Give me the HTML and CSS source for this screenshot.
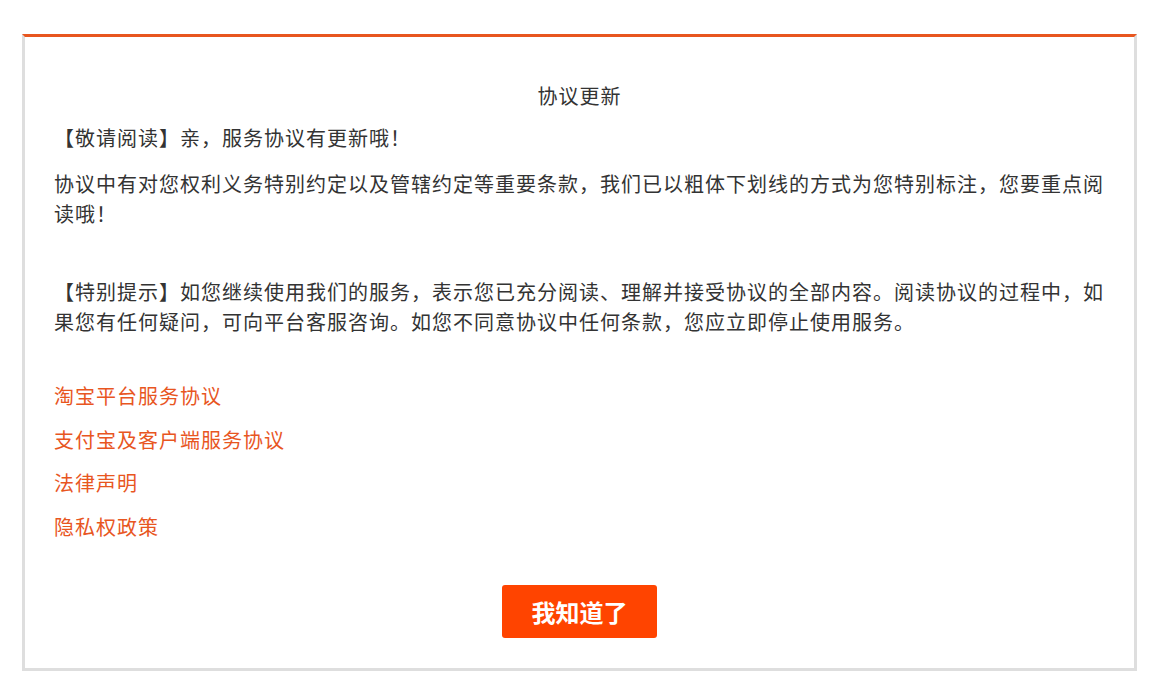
FILE: index.html
```html
<!DOCTYPE html>
<html lang="zh-CN">
<head>
  <meta charset="UTF-8">
  <meta name="viewport" content="width=device-width, initial-scale=1.0">
  <title>协议更新</title>
  <link rel="stylesheet" href="styles.css">
</head>
<body>
  <div class="dialog">
    <div class="title">协议更新</div>
    <p class="lead">【敬请阅读】亲，服务协议有更新哦！</p>
    <p>协议中有对您权利义务特别约定以及管辖约定等重要条款，我们已以粗体下划线的方式为您特别标注，您要重点阅读哦！</p>
    <p class="tip">【特别提示】如您继续使用我们的服务，表示您已充分阅读、理解并接受协议的全部内容。阅读协议的过程中，如果您有任何疑问，可向平台客服咨询。如您不同意协议中任何条款，您应立即停止使用服务。</p>
    <div class="links">
      <a href="#">淘宝平台服务协议</a>
      <a href="#">支付宝及客户端服务协议</a>
      <a href="#">法律声明</a>
      <a href="#">隐私权政策</a>
    </div>
    <div class="actions">
      <button class="ok-btn">我知道了</button>
    </div>
  </div>
</body>
</html>
```

FILE: styles.css
```css
body {
  margin: 0;
  padding: 34px 0 0 22px;
  font-family: "Noto Sans CJK SC", "Noto Sans", sans-serif;
  background-color: #fff;
  color: #333;
}
.dialog {
  box-sizing: border-box;
  width: 1115px;
  height: 637px;
  border: 3px solid #dedede;
  border-top-color: #e8561f;
  padding: 44px 29px 0 29px;
  font-size: 20px;
  letter-spacing: 1px;
  line-height: 30px;
}
.title {
  text-align: center;
  margin-bottom: 12px;
}
.dialog p {
  margin: 0 0 16px 0;
}
.dialog p.tip {
  margin-top: 48px;
}
.links {
  margin-top: 37px;
  display: flex;
  flex-direction: column;
  align-items: flex-start;
}
.links a {
  color: #e8561f;
  text-decoration: none;
  line-height: 43.5px;
}
.actions {
  display: flex;
  justify-content: center;
  margin-top: 37px;
}
.ok-btn {
  width: 155px;
  height: 53px;
  border: none;
  border-radius: 3px;
  background-color: #ff4400;
  color: #fff;
  font-family: inherit;
  font-size: 24px;
  font-weight: bold;
  letter-spacing: 0;
  cursor: pointer;
}
```
